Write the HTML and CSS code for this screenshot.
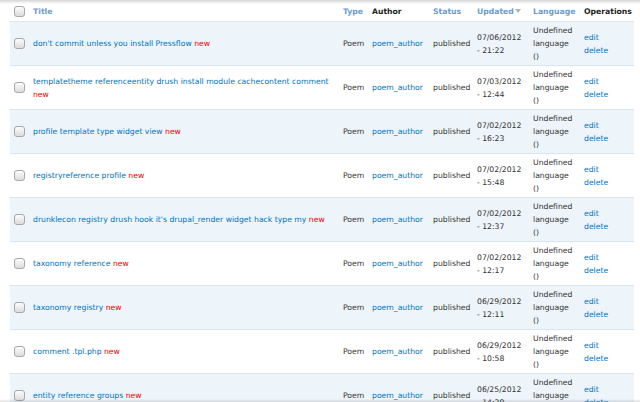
FILE: index.html
```html
<!DOCTYPE html>
<html>
<head>
<meta charset="utf-8">
<link rel="stylesheet" href="styles.css">
</head>
<body>
<div class="shade-top"></div>
<table class="content-table">
  <colgroup>
    <col class="c-check"><col class="c-title"><col class="c-type"><col class="c-author"><col class="c-status"><col class="c-updated"><col class="c-lang"><col class="c-ops">
  </colgroup>
  <thead>
    <tr>
      <th><input type="checkbox" class="cb"></th>
      <th><a href="#">Title</a></th>
      <th><a href="#">Type</a></th>
      <th>Author</th>
      <th><a href="#">Status</a></th>
      <th><a href="#">Updated<span class="sort-arrow"></span></a></th>
      <th><a href="#">Language</a></th>
      <th>Operations</th>
    </tr>
  </thead>
  <tbody>
    <tr class="odd">
      <td><input type="checkbox" class="cb"></td>
      <td><a href="#">don't commit unless you install Pressflow</a> <span class="marker">new</span></td>
      <td>Poem</td><td><a href="#">poem_author</a></td><td>published</td>
      <td>07/06/2012 - 21:22</td><td>Undefined language ()</td>
      <td><ul class="ops"><li><a href="#">edit</a></li><li><a href="#">delete</a></li></ul></td>
    </tr>
    <tr class="even">
      <td><input type="checkbox" class="cb"></td>
      <td><a href="#">templatetheme referenceentity drush install module cachecontent comment</a> <span class="marker">new</span></td>
      <td>Poem</td><td><a href="#">poem_author</a></td><td>published</td>
      <td>07/03/2012 - 12:44</td><td>Undefined language ()</td>
      <td><ul class="ops"><li><a href="#">edit</a></li><li><a href="#">delete</a></li></ul></td>
    </tr>
    <tr class="odd">
      <td><input type="checkbox" class="cb"></td>
      <td><a href="#">profile template type widget view</a> <span class="marker">new</span></td>
      <td>Poem</td><td><a href="#">poem_author</a></td><td>published</td>
      <td>07/02/2012 - 16:23</td><td>Undefined language ()</td>
      <td><ul class="ops"><li><a href="#">edit</a></li><li><a href="#">delete</a></li></ul></td>
    </tr>
    <tr class="even">
      <td><input type="checkbox" class="cb"></td>
      <td><a href="#">registryreference profile</a> <span class="marker">new</span></td>
      <td>Poem</td><td><a href="#">poem_author</a></td><td>published</td>
      <td>07/02/2012 - 15:48</td><td>Undefined language ()</td>
      <td><ul class="ops"><li><a href="#">edit</a></li><li><a href="#">delete</a></li></ul></td>
    </tr>
    <tr class="odd">
      <td><input type="checkbox" class="cb"></td>
      <td><a href="#">drunklecon registry drush hook it's drupal_render widget hack type my</a> <span class="marker">new</span></td>
      <td>Poem</td><td><a href="#">poem_author</a></td><td>published</td>
      <td>07/02/2012 - 12:37</td><td>Undefined language ()</td>
      <td><ul class="ops"><li><a href="#">edit</a></li><li><a href="#">delete</a></li></ul></td>
    </tr>
    <tr class="even">
      <td><input type="checkbox" class="cb"></td>
      <td><a href="#">taxonomy reference</a> <span class="marker">new</span></td>
      <td>Poem</td><td><a href="#">poem_author</a></td><td>published</td>
      <td>07/02/2012 - 12:17</td><td>Undefined language ()</td>
      <td><ul class="ops"><li><a href="#">edit</a></li><li><a href="#">delete</a></li></ul></td>
    </tr>
    <tr class="odd">
      <td><input type="checkbox" class="cb"></td>
      <td><a href="#">taxonomy registry</a> <span class="marker">new</span></td>
      <td>Poem</td><td><a href="#">poem_author</a></td><td>published</td>
      <td>06/29/2012 - 12:11</td><td>Undefined language ()</td>
      <td><ul class="ops"><li><a href="#">edit</a></li><li><a href="#">delete</a></li></ul></td>
    </tr>
    <tr class="even">
      <td><input type="checkbox" class="cb"></td>
      <td><a href="#">comment .tpl.php</a> <span class="marker">new</span></td>
      <td>Poem</td><td><a href="#">poem_author</a></td><td>published</td>
      <td>06/29/2012 - 10:58</td><td>Undefined language ()</td>
      <td><ul class="ops"><li><a href="#">edit</a></li><li><a href="#">delete</a></li></ul></td>
    </tr>
    <tr class="odd">
      <td><input type="checkbox" class="cb"></td>
      <td><a href="#">entity reference groups</a> <span class="marker">new</span></td>
      <td>Poem</td><td><a href="#">poem_author</a></td><td>published</td>
      <td>06/25/2012 - 14:29</td><td>Undefined language ()</td>
      <td><ul class="ops"><li><a href="#">edit</a></li><li><a href="#">delete</a></li></ul></td>
    </tr>
  </tbody>
</table>
<div class="shade-bottom"></div>
</body>
</html>
```

FILE: styles.css
```css
html, body {
  margin: 0;
  padding: 0;
  background: #fff;
  overflow: hidden;
}
body {
  font-family: "DejaVu Sans", Verdana, sans-serif;
  font-size: 7.7px;
  line-height: 13px;
  color: #333;
  padding: 0 6px 0 10px;
}
.shade-top {
  position: fixed;
  left: 0; right: 0; top: 0;
  height: 4px;
  background: linear-gradient(rgba(0,0,0,0.16), rgba(0,0,0,0));
}
.shade-bottom {
  position: fixed;
  left: 0; right: 0; bottom: 0;
  height: 3px;
  background: linear-gradient(rgba(0,0,0,0), rgba(0,0,0,0.12));
}
a { color: #0074bd; text-decoration: none; }
.content-table {
  width: 624px;
  border-collapse: collapse;
  table-layout: fixed;
}
.c-check { width: 19px; }
.c-title { width: 310px; }
.c-type { width: 29px; }
.c-author { width: 61px; }
.c-status { width: 44px; }
.c-updated { width: 56px; }
.c-lang { width: 51px; }
.c-ops { width: 54px; }
th {
  text-align: left;
  font-weight: bold;
  color: #222;
  padding: 4px 4px 3px 4px;
  border-bottom: 1px solid #dbe7f2;
  white-space: nowrap;
  height: 14px;
}
th a { color: #6a9ccc; }
.sort-arrow {
  display: inline-block;
  width: 0; height: 0;
  border-left: 3.5px solid transparent;
  border-right: 3.5px solid transparent;
  border-top: 4px solid #aab4be;
  margin-left: 1px;
  vertical-align: 1px;
}
td {
  padding: 2px 4px;
  vertical-align: middle;
  border-bottom: 1px solid #d8e6f3;
  height: 39px;
}
tr.odd td { background: #edf4fa; }
tr.even td { background: #fff; }
.marker { color: #e00; }
.ops { list-style: none; margin: 0; padding: 0; }
.cb {
  -webkit-appearance: none;
  appearance: none;
  display: block;
  width: 11px; height: 11px;
  margin: 0;
  border: 1px solid #a8a8a8;
  border-radius: 3px;
  background: linear-gradient(#fdfdfd, #dcdcdc);
  box-sizing: border-box;
}
```
